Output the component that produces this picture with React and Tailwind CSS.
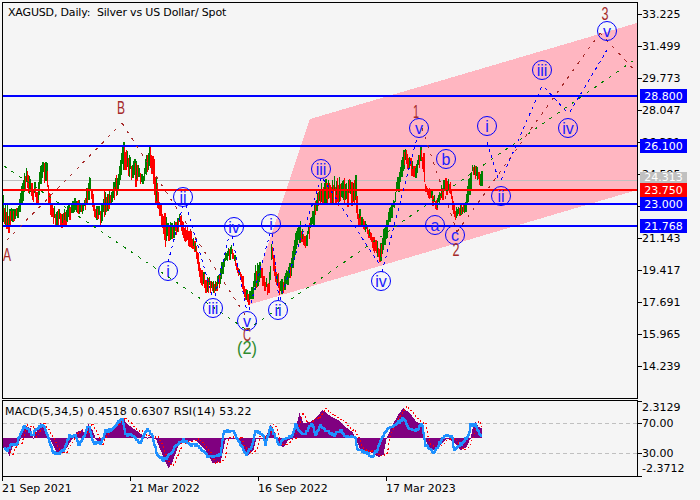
// XAGUSD daily chart with wave marks, drawn from hand-read pixel positions
const bars = [[3,195,222],[8,205,233],[12,205,222],[18,203,218],[22,175,205],[26,168,190],[30,178,195],[34,182,205],[37,190,205],[40,160,190],[42,158,178],[45,160,185],[47,165,195],[49,190,215],[52,200,222],[55,208,228],[58,205,225],[62,212,232],[67,205,222],[72,197,217],[76,195,212],[80,198,215],[84,200,212],[87,180,205],[89,172,195],[92,190,208],[95,205,222],[100,205,225],[105,187,215],[110,190,205],[117,170,195],[120,155,180],[122,131,170],[125,145,170],[127,150,175],[131,158,180],[135,155,187],[140,170,185],[143,175,185],[146,150,175],[148,144,170],[152,150,175],[155,165,205],[158,190,215],[162,205,228],[165,213,247],[170,220,240],[175,218,237],[180,213,230],[185,223,243],[190,230,247],[195,237,253],[200,262,283],[205,273,293],[210,277,293],[215,280,293],[219,270,288],[221,260,280],[225,250,262],[231,243,260],[235,257,267],[240,270,282],[245,283,300],[248,293,305],[252,285,300],[255,260,290],[260,262,283],[265,277,293],[268,280,295],[270,260,280],[271,237,260],[275,260,282],[279,277,295],[283,277,293],[290,258,282],[295,230,255],[300,220,240],[305,237,248],[311,213,235],[315,198,215],[320,183,205],[325,176,205],[335,176,205],[345,178,208],[352,180,205],[355,173,207],[358,208,225],[362,213,228],[367,226,236],[372,233,248],[376,237,258],[380,243,263],[384,222,245],[390,205,222],[394,197,208],[398,167,192],[402,150,172],[405,147,165],[410,158,175],[415,162,178],[420,147,165],[424,150,182],[425,182,192],[430,187,202],[435,197,212],[440,187,202],[445,175,195],[450,178,195],[452,193,210],[455,207,222],[460,203,215],[465,200,212],[468,173,202],[472,163,176],[476,165,180],[480,170,186]]

const histPts = [[3,448],[7,452],[9,456],[12,447],[18,443],[20,438],[23,426],[30,428],[33,438],[40,423],[46,432],[49,438],[57,454],[63,453],[68,445],[72,438],[76,432],[82,430],[85,435],[88,424],[92,430],[95,438],[99,445],[102,438],[107,430],[115,425],[122,418],[127,424],[135,430],[142,435],[147,438],[150,436],[155,438],[160,450],[165,462],[168,468],[172,462],[178,445],[185,442],[195,440],[205,450],[212,463],[220,462],[225,440],[227,438],[238,438],[240,445],[248,455],[253,450],[256,438],[265,438],[270,425],[274,432],[277,445],[283,447],[288,440],[292,438],[296,425],[299,413],[303,423],[310,422],[316,417],[322,410],[330,416],[338,420],[345,427],[352,432],[355,438],[360,450],[370,452],[378,457],[383,455],[386,438],[392,425],[398,414],[403,408],[410,414],[416,422],[422,424],[424,438],[428,446],[433,450],[440,445],[447,438],[453,442],[460,450],[466,447],[470,438],[473,425],[475,422],[478,427],[481,428]]

const rsiLeft = [[10,160],[20,170],[30,150],[50,145],[60,115],[72,95],[85,105],[95,125],[105,105],[125,90],[135,105],[150,150],[160,175],[175,175],[190,165],[205,125],[225,120],[235,150],[250,125],[265,90],[280,145],[300,145],[315,110],[335,105],[350,85],[365,72],[375,120],[395,120],[420,145],[440,100],[455,120],[470,180],[490,195],[510,175],[530,150],[550,135],[570,150],[590,150],[610,170],[620,185],[660,180],[670,110],[700,108]]
const rsiRight = [[0,150],[20,178],[35,150],[45,110],[68,118],[75,148],[90,95],[105,125],[115,150],[130,130],[155,125],[165,90],[190,120],[215,85],[225,120],[240,95],[280,120],[300,105],[315,125],[345,125],[350,160],[370,170],[395,185],[410,165],[425,125],[440,105],[465,90],[490,70],[505,100],[530,105],[545,85],[555,150],[580,175],[600,140],[615,120],[635,125],[640,165],[665,145],[685,120],[690,90],[705,90],[718,120]]
const rsi = [
  ...rsiLeft.map(([x, y]) => [x / 3, 395 + y / 3]),
  ...rsiRight.map(([x, y]) => [240 + x / 3, 395 + y / 3]),
]

const circles = [
  ['ii', 183, 197], ['iv', 234, 227], ['i', 271, 224], ['iii', 321, 169], ['v', 419, 128],
  ['b', 446, 159], ['a', 435, 225], ['c', 455, 235], ['i', 487, 126], ['ii', 501, 196],
  ['iii', 542, 70], ['iv', 568, 128], ['v', 607, 31], ['i', 168, 271], ['iii', 213, 308],
  ['v', 247, 321], ['ii', 278, 310], ['iv', 381, 281],
]

const waveLabels = [
  ['A', 7, 261, 8, '#a52a2a'], ['B', 121, 114, 8, '#a52a2a'], ['C', 247, 341, 8, '#a52a2a'],
  ['(2)', 247, 354, 20, '#2e8b2e'], ['1', 416, 118, 6, '#a52a2a'], ['2', 456, 256, 7, '#a52a2a'], ['3', 605, 20, 7, '#a52a2a'],
]

const blueDash = [
  [[168, 262], [183, 206]], [[186, 205], [213, 298]], [[215, 296], [229, 236]], [[232, 236], [247, 312]],
  [[249, 310], [270, 234]], [[272, 234], [279, 300]], [[280, 300], [321, 179]], [[323, 179], [380, 265]],
  [[382, 272], [417, 138]], [[487, 142], [498, 178]], [[501, 180], [542, 86]], [[545, 88], [567, 112]],
  [[570, 112], [607, 50]],
]

const greenDash = [[[4, 166], [247, 330]], [[247, 330], [637, 58]]]
const brownDash = [[[7, 240], [122, 123]], [[122, 123], [247, 318]], [[422, 128], [457, 232]], [[457, 232], [600, 33]], [[600, 33], [637, 73]]]

const priceTicks = ['33.225', '31.499', '29.773', '28.047', '26.321', '24.595', '', '21.143', '19.417', '17.691', '15.965', '14.239']
const dates = ['21 Sep 2021', '21 Mar 2022', '16 Sep 2022', '17 Mar 2023']

function interp(pts, x, i) {
  for (let k = 1; k < pts.length; k++) {
    if (x <= pts[k][0]) {
      const a = pts[k - 1]
      const b = pts[k]
      return a[i] + ((b[i] - a[i]) * (x - a[0])) / (b[0] - a[0])
    }
  }
  return pts[pts.length - 1][i]
}

function makeRand(seed) {
  let s = seed
  return () => {
    s = (s * 16807) % 2147483647
    return s / 2147483647
  }
}

function candles() {
  const rand = makeRand(4242)
  const out = []
  let prev = 210
  for (let x = 3; x <= 481; x++) {
    const top = interp(bars, x, 1)
    const bot = interp(bars, x, 2)
    const span = bot - top
    const a = top + rand() * span * 0.4
    const b = Math.min(bot, a + span * (0.45 + rand() * 0.55))
    const mid = (a + b) / 2
    const up = mid < prev + (rand() - 0.5) * 5
    prev = mid
    out.push({ x, y: Math.round(a), h: Math.max(3, Math.round(b - a)), w: rand() > 0.7 ? 2 : 1, up })
  }
  return out
}

function stepped(pts, rand, dx, dy) {
  const out = []
  for (let x = 4; x + dx <= 481; x++) {
    const y = Math.round(interp(pts, x, 1) + (rand() - 0.5) * 2.5) + dy
    out.push(`${x + dx},${y}`, `${x + dx + 1},${y}`)
  }
  return out.join(' ')
}

function Chart() {
  return (
    <svg width="634" height="395" viewBox="3 3 634 395" className="block" shapeRendering="crispEdges">
      <polygon points="310,119 637,23 637,190 248,305" fill="#ffb6c1" />
      <line x1="3" x2="637" y1="180.5" y2="180.5" stroke="#c0c0c0" />
      {candles().map((c) => (
        <rect key={c.x} x={c.x} y={c.y} width={c.w} height={c.h} fill={c.up ? '#008000' : '#ff0000'} />
      ))}
      {[96, 146, 204, 226].map((y) => (
        <rect key={y} x="3" y={y - 1} width="634" height="2" fill="#0000ff" />
      ))}
      <rect x="3" y="189" width="634" height="2" fill="#ff0000" />
      {greenDash.map(([a, b], i) => (
        <line key={i} x1={a[0]} y1={a[1]} x2={b[0]} y2={b[1]} stroke="#008000" strokeDasharray="3 6" />
      ))}
      {brownDash.map(([a, b], i) => (
        <line key={i} x1={a[0]} y1={a[1]} x2={b[0]} y2={b[1]} stroke="#a52a2a" strokeDasharray="3 6" />
      ))}
      {blueDash.map(([a, b], i) => (
        <line key={i} x1={a[0]} y1={a[1]} x2={b[0]} y2={b[1]} stroke="#0000ff" strokeDasharray="3 4" />
      ))}
      <g shapeRendering="auto" fontFamily="'Liberation Sans', sans-serif">
        {circles.map(([t, x, y], i) => (
          <g key={i}>
            <circle cx={x} cy={y} r="9.5" fill="none" stroke="#0000ff" />
            <text x={x} y={y + 6} textAnchor="middle" fontSize="16" fill="#2020ff">{t}</text>
          </g>
        ))}
        {waveLabels.map(([t, x, y, w, color]) => (
          <text key={t} x={x} y={y} textAnchor="middle" fontSize="18" textLength={w} lengthAdjust="spacingAndGlyphs" fill={color}>{t}</text>
        ))}
      </g>
    </svg>
  )
}

function Indicator() {
  const xs = []
  for (let x = 3; x <= 481; x++) xs.push(x)
  const rand = makeRand(77)
  const rsiPoints = stepped(rsi, rand, 0, 0)
  const signal = stepped(histPts, rand, 3, -1)
  return (
    <svg width="634" height="75" viewBox="3 401 634 75" className="block" shapeRendering="crispEdges">
      <line x1="3" x2="637" y1="423.5" y2="423.5" stroke="#c0c0c0" strokeDasharray="4 3" />
      <line x1="3" x2="637" y1="453.5" y2="453.5" stroke="#c0c0c0" strokeDasharray="4 3" />
      {xs.map((x) => {
        const y = Math.round(interp(histPts, x, 1))
        return <rect key={x} x={x} y={Math.min(y, 438)} width="1" height={Math.max(1, Math.abs(y - 438))} fill="#800080" />
      })}
      <polyline points={signal} fill="none" stroke="#ff0000" strokeDasharray="2 3" />
      <polyline points={rsiPoints} fill="none" stroke="#1e90ff" strokeWidth="2.5" />
    </svg>
  )
}

export default function App() {
  return (
    <div className="w-[700px] h-[500px] bg-[#f5f5f5] pt-[2px] pl-[2px] text-[11px] leading-[13px] text-black font-['DejaVu_Sans',sans-serif] overflow-hidden">
      {/* main chart with price axis */}
      <div className="flex">
        <div className="relative border border-black w-[636px] h-[397px]">
          <Chart />
          <div className="absolute left-[5px] top-[3px] whitespace-pre tracking-[-0.17px]">XAGUSD, Daily:  Silver vs US Dollar/ Spot</div>
        </div>
        <div className="relative w-[62px] flex flex-col gap-[16px] pt-[4px]">
          {priceTicks.map((t, i) => (
            <div key={i} className="flex items-center h-[16px]">
              <div className="w-[4px] h-px bg-black" />
              <span>{t}</span>
            </div>
          ))}
          <div className="absolute left-[2px] w-[47px] top-[87px] h-[14px] flex items-center justify-center text-white bg-[#0000ff]">28.800</div>
          <div className="absolute left-[2px] w-[47px] top-[137px] h-[14px] flex items-center justify-center text-white bg-[#0000ff]">26.100</div>
          <div className="absolute left-[2px] w-[47px] top-[170px] h-[11px] flex items-center justify-center text-white bg-[#c0c0c0]">24.313</div>
          <div className="absolute left-[2px] w-[47px] top-[181px] h-[14px] flex items-center justify-center text-white bg-[#ff0000]">23.750</div>
          <div className="absolute left-[2px] w-[47px] top-[195px] h-[14px] flex items-center justify-center text-white bg-[#0000ff]">23.000</div>
          <div className="absolute left-[2px] w-[47px] top-[217px] h-[14px] flex items-center justify-center text-white bg-[#0000ff]">21.768</div>
        </div>
      </div>

      {/* MACD / RSI pane */}
      <div className="flex mt-px">
        <div className="relative border border-black w-[636px] h-[77px]">
          <Indicator />
          <div className="absolute left-[2px] top-[4px] whitespace-pre tracking-[0.18px]">MACD(5,34,5) 0.4518 0.6307 RSI(14) 53.22</div>
        </div>
        <div className="w-[62px] flex flex-col">
          <div className="flex h-[15px]">
            <div className="w-[4px] h-px mt-px bg-black" />
            <span className="mt-[1px]">2.3129</span>
          </div>
          <div className="flex items-center h-[16px]">
            <div className="w-[4px] h-px bg-black" />
            <span>70.00</span>
          </div>
          <div className="flex items-center h-[16px] mt-[14px]">
            <div className="w-[4px] h-px bg-black" />
            <span>30.00</span>
          </div>
          <div className="pl-[4px] h-[13px] mt-[1px]">-2.3712</div>
          <div className="w-[4px] h-px bg-black mt-px" />
        </div>
      </div>

      {/* date axis */}
      <div className="flex">
        {dates.map((d) => (
          <div key={d} className="w-[128px] flex flex-col">
            <div className="w-px h-[4px] bg-black" />
            <span className="mt-[1px]">{d}</span>
          </div>
        ))}
      </div>
    </div>
  )
}
